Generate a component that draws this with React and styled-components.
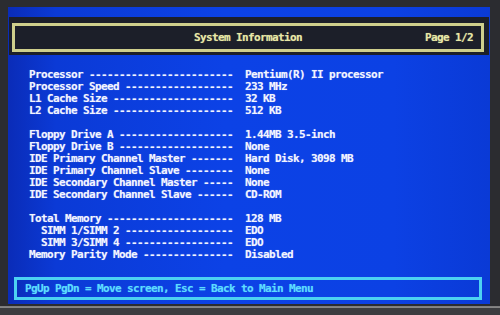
import React from "react";
import styled, { createGlobalStyle } from "styled-components";

const GlobalStyle = createGlobalStyle`
  html, body { margin: 0; padding: 0; }
  body {
    width: 500px;
    height: 315px;
    overflow: hidden;
    background: linear-gradient(to bottom, #2b2c30 0px, #2b2c30 306px, #7a7a7a 306px, #8a8a8a 308px, #3c3d40 308px);
  }
`;

const Bezel = styled.div`
  width: 500px;
  height: 315px;
  box-sizing: border-box;
  padding: 7px 10px 11px 8px;
  display: flex;
`;

const Screen = styled.div`
  flex: 1;
  display: flex;
  flex-direction: column;
  background: linear-gradient(to right, #0a2cb8 0%, #0b3ad6 10%, #0c42e6 45%, #0c41e4 80%, #0a3ad6 100%);
  font-family: "DejaVu Sans Mono", "Liberation Mono", monospace;
  font-weight: bold;
  font-size: 11px;
  letter-spacing: -0.62px;
  line-height: 12px;
  color: #f2f4ff;
  text-shadow: 0 0 1px rgba(255, 255, 255, 0.45);
`;

const TitleBar = styled.div`
  margin: 10px 1px 0 1px;
  height: 38px;
  box-sizing: border-box;
  padding: 6px 5px 3px 3px;
  background: #1c1f29;
  display: flex;
`;

const TitleFrame = styled.div`
  flex: 1;
  box-sizing: border-box;
  border: 3px solid #cfcf8c;
  display: grid;
  grid-template-columns: 1fr auto 1fr;
  align-items: center;
  padding: 0 8px;
  color: #e8e8a6;
  text-shadow: 0 0 1px rgba(232, 232, 166, 0.5);
`;

const Title = styled.span`
  grid-column: 2;
`;

const Page = styled.span`
  grid-column: 3;
  justify-self: end;
`;

const Content = styled.div`
  margin-top: 14px;
  padding-left: 21px;
  display: flex;
  flex-direction: column;
`;

const Group = styled.div`
  display: flex;
  flex-direction: column;
  margin-bottom: ${(p) => (p.$last ? 0 : 12)}px;
`;

const Row = styled.div`
  display: grid;
  grid-template-columns: 216px 1fr;
  height: 12px;
  white-space: pre;
`;

const Label = styled.span``;
const Value = styled.span``;

const Footer = styled.div`
  margin: 16px 8px 4px 6px;
  height: 23px;
  box-sizing: border-box;
  border: 3px solid #4cd2f2;
  display: flex;
  align-items: center;
  padding-left: 8px;
  color: #5cdcff;
  text-shadow: 0 0 1px rgba(92, 220, 255, 0.5);
  white-space: pre;
`;

const pad = (label) => {
  const base = label + " ";
  return base + "-".repeat(Math.max(0, 34 - base.length));
};

const groups = [
  [
    ["Processor", "Pentium(R) II processor"],
    ["Processor Speed", "233 MHz"],
    ["L1 Cache Size", "32 KB"],
    ["L2 Cache Size", "512 KB"],
  ],
  [
    ["Floppy Drive A", "1.44MB 3.5-inch"],
    ["Floppy Drive B", "None"],
    ["IDE Primary Channel Master", "Hard Disk, 3098 MB"],
    ["IDE Primary Channel Slave", "None"],
    ["IDE Secondary Channel Master", "None"],
    ["IDE Secondary Channel Slave", "CD-ROM"],
  ],
  [
    ["Total Memory", "128 MB"],
    ["  SIMM 1/SIMM 2", "EDO"],
    ["  SIMM 3/SIMM 4", "EDO"],
    ["Memory Parity Mode", "Disabled"],
  ],
];

export default function App() {
  return (
    <>
      <GlobalStyle />
      <Bezel>
        <Screen>
          <TitleBar>
            <TitleFrame>
              <Title>System Information</Title>
              <Page>Page 1/2</Page>
            </TitleFrame>
          </TitleBar>
          <Content>
            {groups.map((g, gi) => (
              <Group key={gi} $last={gi === groups.length - 1}>
                {g.map(([l, v]) => (
                  <Row key={l}>
                    <Label>{pad(l)}</Label>
                    <Value>{v}</Value>
                  </Row>
                ))}
              </Group>
            ))}
          </Content>
          <Footer>PgUp PgDn = Move screen, Esc = Back to Main Menu</Footer>
        </Screen>
      </Bezel>
    </>
  );
}
